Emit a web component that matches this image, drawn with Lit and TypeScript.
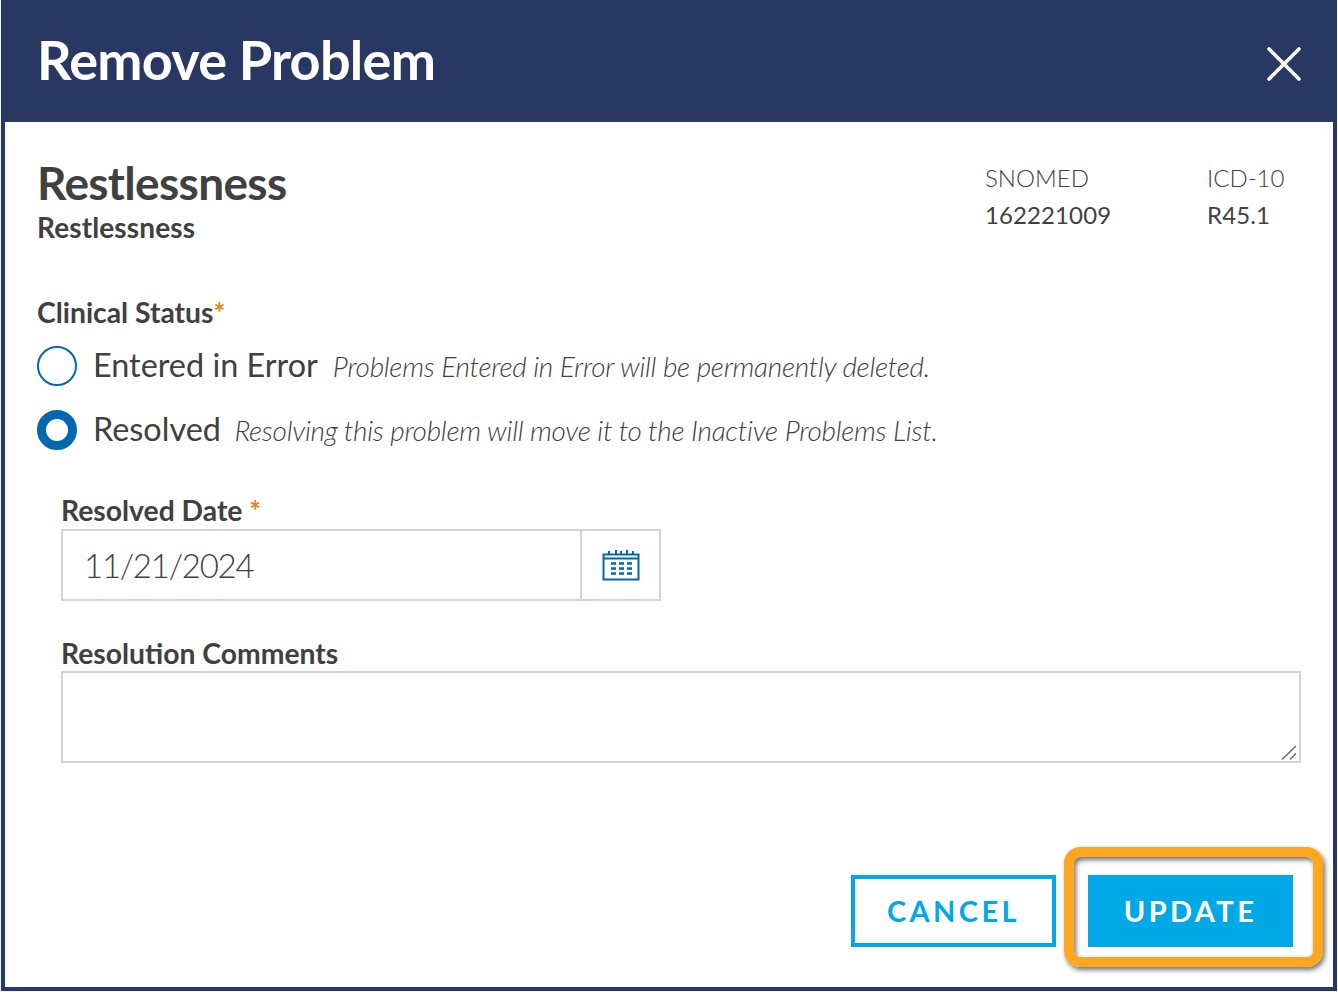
import { LitElement, html, css } from "lit";
import { customElement } from "lit/decorators.js";

@customElement("app-root")
export class AppRoot extends LitElement {
  static styles = css`
    :host { display: block; width: 1338px; height: 992px; background: #f4f4f5; font-family: Lato, sans-serif; color: #404040; overflow: hidden; }
    * { box-sizing: border-box; }
    .modal { margin-left: 1px; width: 1336px; height: 991px; display: flex; flex-direction: column; background: #293763; }
    .header { height: 122px; flex: none; display: flex; align-items: center; justify-content: space-between; padding: 0 36px 0 36px; color: #fff; }
    .title { margin: 0 0 2px; font-size: 54px; line-height: 118px; font-weight: 700; letter-spacing: -0.72px; }
    .close { display: block; width: 34px; height: 34px; margin-top: 5px; }
    .body { flex: 1; margin: 0 4px 4px 4px; background: #fff; padding: 36px 33px 0 32px; display: flex; flex-direction: column; position: relative; }
    .top { display: flex; justify-content: space-between; height: 96px; }
    h2 { margin: -1px 0 1px; font-size: 46px; line-height: 52px; font-weight: 700; letter-spacing: -0.65px; }
    .sub { font-size: 28px; line-height: 34px; font-weight: 700; letter-spacing: 0.12px; }
    .codes { display: flex; padding: 1px 15px 0 0; }
    .code { width: 222px; font-size: 24px; line-height: 37px; font-weight: 300; }
    .code.last { width: 78px; }
    .code b { display: block; font-weight: 400; letter-spacing: 0.1px; }
    .label { font-size: 28.3px; line-height: 36px; font-weight: 700; display: block; }
    .req { color: #ec8613; font-size: 28px; }
    .status { margin-top: 40px; }
    .radio { display: flex; align-items: center; height: 40px; margin-top: 24px; }
    .status .label + .radio { margin-top: 16px; }
    .dot { width: 40px; height: 40px; border-radius: 50%; border: 2px solid #0468b1; flex: none; margin-right: 16px; }
    .dot.on { border-width: 9.5px; }
    .opt { font-size: 32.4px; margin: -4px 15px 0 0; }
    .opt.tight { margin-right: 13.5px; }
    .hint { font-size: 28px; font-style: italic; font-weight: 300; letter-spacing: -0.29px; }
    .field { margin: 0 0 0 24px; }
    .field.first { margin-top: 42px; }
    .field.second { margin-top: 34px; }
    .date { display: flex; width: 600px; height: 72px; margin-top: 1px; border: 2px solid #cfd5de; }
    .date-value { flex: 1; padding-left: 21px; font-size: 33px; line-height: 68px; font-weight: 300; letter-spacing: -1.25px; border-right: 2px solid #cfd5de; }
    .cal { width: 77px; display: flex; align-items: center; justify-content: center; }
    .comments { position: relative; width: 1240px; height: 92px; border: 2px solid #cfd5de; }
    .grip { position: absolute; right: 0; bottom: 0; width: 18px; height: 16px; }
    .actions { display: flex; justify-content: flex-end; gap: 32px; margin-top: 112px; padding-right: 7px; }
    .btn { width: 205px; height: 72px; border: 4px solid #00a9e6; padding-bottom: 2px; font-size: 29px; font-weight: 700; letter-spacing: 3.4px; display: flex; align-items: center; justify-content: center; color: #00a9e6; background: #fff; }
    .btn.primary { background: #00a9e6; color: #fff; }
    .callout { position: absolute; left: 1059px; top: 725px; width: 259px; height: 120px; border: 10px solid #fea61f; border-radius: 16px; box-shadow: 2px 3px 5px rgba(0,0,0,.55), inset 2px 3px 5px rgba(0,0,0,.55); }
  `;

  render() {
    return html`
      <div class="modal">
        <div class="header">
          <h1 class="title">Remove Problem</h1>
          <svg class="close" viewBox="0 0 34 34"><path d="M2 2 32 32M32 2 2 32" stroke="#fff" stroke-width="3.6" stroke-linecap="round" fill="none"/></svg>
        </div>
        <div class="body">
          <div class="top">
            <div>
              <h2>Restlessness</h2>
              <div class="sub">Restlessness</div>
            </div>
            <div class="codes">
              <div class="code">SNOMED<b>162221009</b></div>
              <div class="code last">ICD-10<b>R45.1</b></div>
            </div>
          </div>
          <div class="status">
            <span class="label">Clinical Status<span class="req">*</span></span>
            <div class="radio"><span class="dot"></span><span class="opt">Entered in Error</span><span class="hint">Problems Entered in Error will be permanently deleted.</span></div>
            <div class="radio"><span class="dot on"></span><span class="opt tight">Resolved</span><span class="hint">Resolving this problem will move it to the Inactive Problems List.</span></div>
          </div>
          <div class="field first">
            <span class="label">Resolved Date <span class="req">*</span></span>
            <div class="date">
              <div class="date-value">11/21/2024</div>
              <div class="cal">
                <svg width="38" height="32" viewBox="0 0 38 32" fill="none" stroke="#0468b1">
                  <path d="M1.5 5.5H36.5V30.5H1.5ZM1.5 9.5H36.5" stroke-width="2"/>
                  <path d="M7 2V5M14 1V5M19 2V5M25 1V5M31 2V5" stroke-width="2"/>
                  <path d="M9 14.5h5M17 14.5h5M25 14.5h5M9 19.5h5M17 19.5h5M25 19.5h5M9 24.5h5M17 24.5h5M25 24.5h5" stroke-width="2.4"/>
                </svg>
              </div>
            </div>
          </div>
          <div class="field second">
            <span class="label">Resolution Comments</span>
            <div class="comments">
              <svg class="grip" viewBox="0 0 18 16" fill="none" stroke="#666" stroke-width="1.4"><path d="M1 14.5 15 1M9 14.5 15 8.5"/></svg>
            </div>
          </div>
          <div class="actions">
            <div class="btn">CANCEL</div>
            <div class="btn primary">UPDATE</div>
          </div>
          <div class="callout"></div>
        </div>
      </div>
    `;
  }
}
